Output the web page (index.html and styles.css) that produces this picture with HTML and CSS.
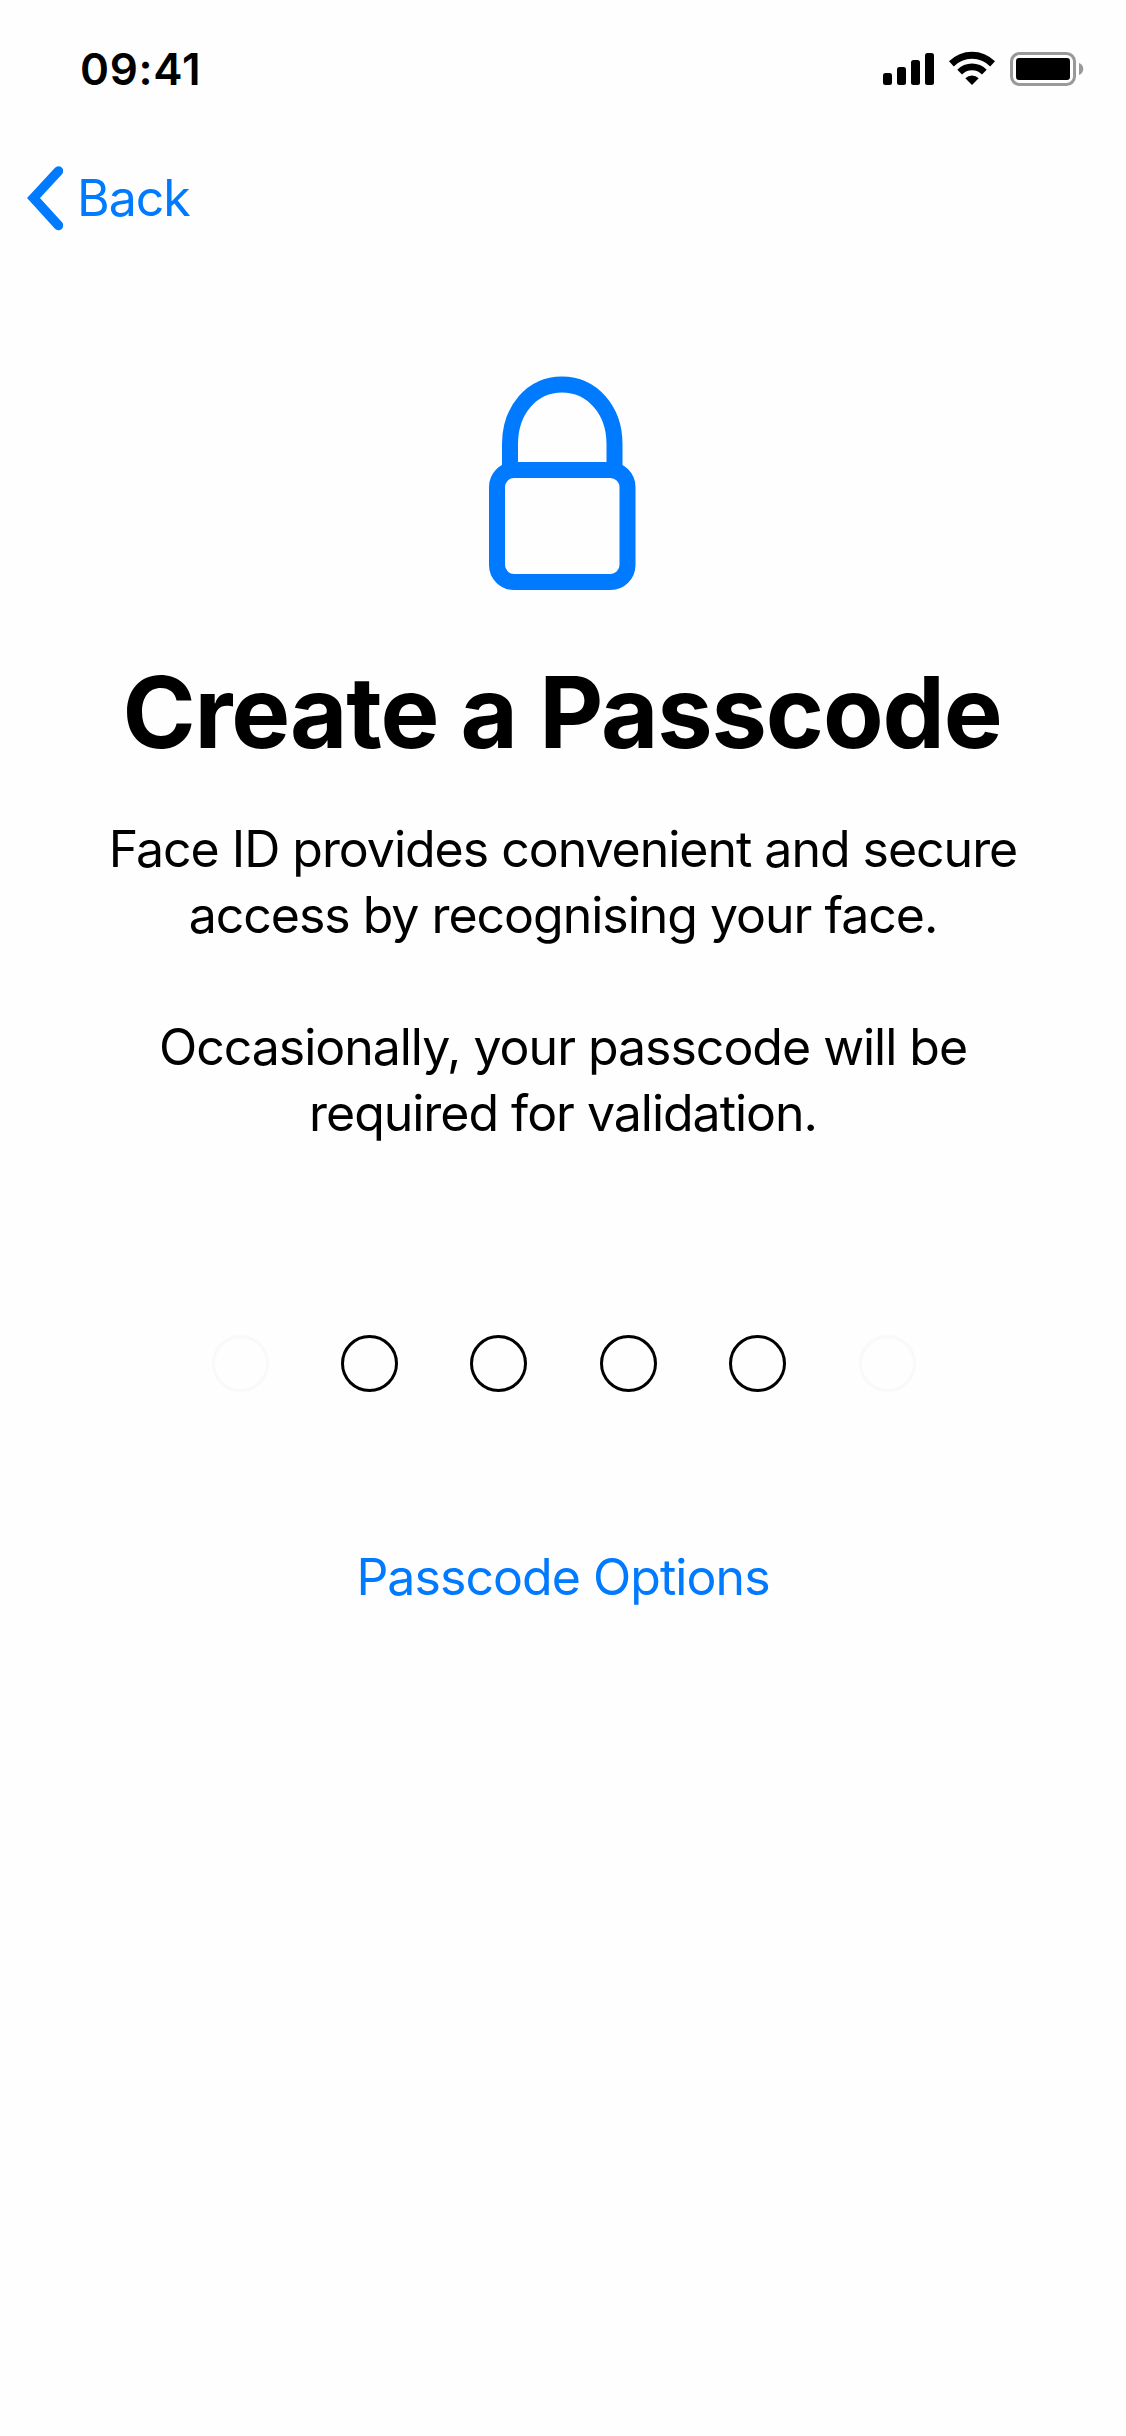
FILE: index.html
```html
<!DOCTYPE html>
<html lang="en">
<head>
    <meta charset="UTF-8">
    <meta name="viewport" content="width=device-width, initial-scale=1.0">
    <title>Create a Passcode</title>
    <link rel="stylesheet" href="styles.css">
</head>
<body>
    <!-- Status bar -->
    <header class="status-bar">
        <span class="time">09:41</span>
        <svg class="status-icons" width="202" height="36" viewBox="0 0 202 36">
            <rect x="1" y="22" width="9" height="12" rx="2.5"/>
            <rect x="15" y="16" width="9" height="18" rx="2.5"/>
            <rect x="29" y="9" width="9" height="25" rx="2.5"/>
            <rect x="43" y="2" width="9" height="32" rx="2.5"/>
            <path d="M67 10.3A32.5 32.5 0 0 1 113 10.3L108.2 15.4A25.5 25.5 0 0 0 71.8 15.4Z"/>
            <path d="M75.3 18.7A20.5 20.5 0 0 1 104.7 18.7L100 23.6A13.8 13.8 0 0 0 80 23.6Z"/>
            <path d="M83.3 27.2A10 10 0 0 1 96.7 27.2L90 34Z"/>
            <rect class="battery-outline" x="129.5" y="2.5" width="63" height="31" rx="8"/>
            <rect x="134" y="7" width="54" height="22" rx="3"/>
            <path class="battery-cap" d="M197 12V24C200 23 201.3 20.5 201.3 18S200 13 197 12Z"/>
        </svg>
    </header>

    <nav class="nav-bar">
        <a class="back" href="#">
            <svg width="38" height="66" viewBox="0 0 38 66">
                <path d="M33.5 6L8.5 33L33.5 60.5"/>
            </svg>
            <span>Back</span>
        </a>
    </nav>

    <main class="content">
        <svg class="lock" width="148" height="216" viewBox="0 0 148 216">
            <path d="M21 95V69C21 35 43 9.500 73 9.500S125.500 35 125.500 69V95"/>
            <rect x="8" y="95" width="130.5" height="112" rx="17"/>
        </svg>
        <h1>Create a Passcode</h1>
        <p>Face ID provides convenient and secure<br>access by recognising your face.</p>
        <p>Occasionally, your passcode will be<br>required for validation.</p>

        <!-- Passcode digits -->
        <div class="digits">
            <span class="digit faded"></span>
            <span class="digit"></span>
            <span class="digit"></span>
            <span class="digit"></span>
            <span class="digit"></span>
            <span class="digit faded"></span>
        </div>

        <a class="options" href="#">Passcode Options</a>
    </main>
</body>
</html>
```
FILE: styles.css
```css
body {
    font-family: 'Inter', sans-serif;
    background-color: #fefefe;
    color: #000;
    margin: 0;
    min-height: 100vh;
}
a {
    color: #007aff;
    text-decoration: none;
}
.status-bar {
    display: flex;
    justify-content: space-between;
    align-items: flex-start;
    box-sizing: border-box;
    height: 138px;
    padding: 51px 42px 0 80px;
}
.time {
    font-size: 44px;
    font-weight: 600;
    line-height: 36px;
    letter-spacing: 0.7px;
}
.battery-outline {
    fill: none;
    stroke: #999;
    stroke-width: 3;
}
.battery-cap {
    fill: #999;
}
.nav-bar {
    height: 237px;
    padding-left: 25px;
}
.back {
    display: inline-flex;
    align-items: center;
    gap: 14px;
    height: 120px;
    font-size: 50px;
    letter-spacing: -1px;
}
.back path {
    fill: none;
    stroke: #007aff;
    stroke-width: 9.5;
    stroke-linecap: round;
}
.content {
    display: flex;
    flex-direction: column;
    align-items: center;
    text-align: center;
}
.lock {
    fill: none;
    stroke: #007aff;
    stroke-width: 16;
}
h1 {
    margin: 61px 2px 44px 0;
    font-size: 99px;
    font-weight: 700;
    line-height: 120px;
    letter-spacing: -1.15px;
}
p {
    margin: 0 0 66px;
    font-size: 50px;
    line-height: 66px;
    letter-spacing: -1.02px;
}
.digits {
    display: flex;
    gap: 72.3px;
    margin: 123px 0 0 2px;
}
.digit {
    box-sizing: border-box;
    width: 57px;
    height: 57px;
    border: 3px solid #000;
    border-radius: 50%;
}
.faded {
    border-color: #f9f9f9;
}
.faded:last-child {
    margin-left: 1px;
}
.options {
    margin-top: 152px;
    font-size: 50px;
    line-height: 66px;
    letter-spacing: -0.95px;
}
```
